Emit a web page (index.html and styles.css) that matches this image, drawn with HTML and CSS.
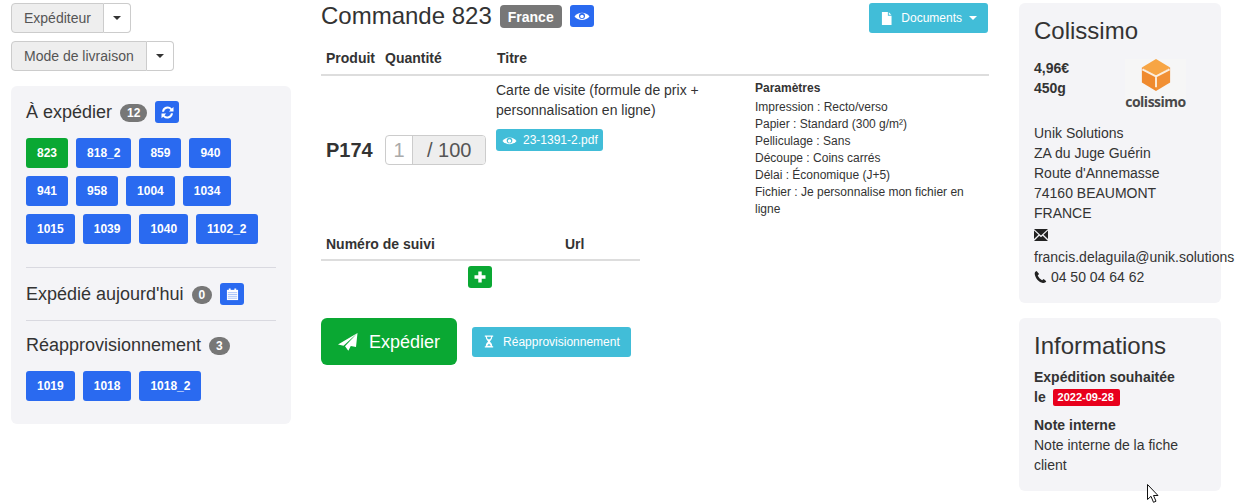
FILE: index.html
```html
<!DOCTYPE html>
<html lang="fr">
<head>
  <meta charset="UTF-8">
  <title>Commande 823</title>
  <link rel="stylesheet" href="styles.css">
</head>
<body>

  <div class="page">

    <!-- left column -->
    <div class="col-left">
      <div class="split-btn">
        <span class="split-label">Expéditeur</span>
        <span class="split-caret"><i class="caret"></i></span>
      </div>
      <div class="split-btn">
        <span class="split-label">Mode de livraison</span>
        <span class="split-caret"><i class="caret"></i></span>
      </div>

      <div class="panel orders">
        <div class="orders-head">
          <span class="orders-title">À expédier</span>
          <span class="badge">12</span>
          <span class="btn-icon blue">
            <svg viewBox="0 0 16 16" width="15" height="15"><path d="M2.2 7.2A6 6 0 0 1 12.6 3.6L14.4 2v5h-5l1.8-1.8A4 4 0 0 0 4.300 7.200zM13.800 8.800A6 6 0 0 1 3.400 12.400L1.600 14V9h5L4.800 10.800A4 4 0 0 0 11.700 8.800z" fill="#fff"/></svg>
          </span>
        </div>
        <div class="order-list">
          <span class="order green">823</span>
          <span class="order">818_2</span>
          <span class="order">859</span>
          <span class="order">940</span>
          <span class="order">941</span>
          <span class="order">958</span>
          <span class="order">1004</span>
          <span class="order">1034</span>
          <span class="order">1015</span>
          <span class="order">1039</span>
          <span class="order">1040</span>
          <span class="order">1102_2</span>
        </div>

        <hr class="first-rule">

        <div class="orders-head">
          <span class="orders-title">Expédié aujourd'hui</span>
          <span class="badge">0</span>
          <span class="btn-icon blue">
            <svg viewBox="0 0 14 14" width="13" height="13"><path d="M1 2h12v11H1z" fill="#fff"/><path d="M3 0.500h2v2.500H3zM9 0.500h2v2.500H9z" fill="#fff"/><path d="M2 5h10M2 7h10M2 9h10M2 11h10" stroke="#2a6af0" stroke-width="0.700" opacity="0.600"/></svg>
          </span>
        </div>

        <hr class="last-rule">

        <div class="orders-head short">
          <span class="orders-title">Réapprovisionnement</span>
          <span class="badge">3</span>
        </div>
        <div class="order-list tight">
          <span class="order">1019</span>
          <span class="order">1018</span>
          <span class="order">1018_2</span>
        </div>
      </div>
    </div>

    <!-- center column -->
    <div class="col-main">
      <div class="main-head">
        <h3>Commande 823</h3>
        <span class="tag">France</span>
        <span class="btn-icon blue">
          <svg viewBox="0 0 16 16" width="16" height="16"><path d="M0.500 8.500C4 3.500 12 3.500 15.500 8.500C12 13 4 13 0.500 8.500z" fill="#fff"/><circle cx="8" cy="8" r="3" fill="#2a6af0"/><circle cx="8" cy="8.500" r="1.800" fill="#fff"/></svg>
        </span>
        <span class="btn-docs">
          <svg viewBox="0 0 12 14" width="11" height="13"><path d="M1 0h6.500v4H11.500v10H1zM8.500 0.200L11.300 3H8.500z" fill="#fff"/></svg>
          Documents
          <i class="caret white"></i>
        </span>
      </div>

      <table class="grid products">
        <colgroup>
          <col class="c-prod"><col class="c-qty"><col class="c-title"><col class="c-params">
        </colgroup>
        <thead>
          <tr><th>Produit</th><th>Quantité</th><th colspan="2">Titre</th></tr>
        </thead>
        <tbody>
          <tr>
            <td class="ref">P174</td>
            <td class="qty-cell">
              <div class="qty"><span class="qty-input">1</span><span class="qty-total">/ 100</span></div>
            </td>
            <td class="title-cell">
              Carte de visite (formule de prix + personnalisation en ligne)
              <span class="btn-file">
                <svg viewBox="0 0 16 16" width="15" height="15"><path d="M0.500 8.500C4 3.500 12 3.500 15.500 8.500C12 13 4 13 0.500 8.500z" fill="#fff"/><circle cx="8" cy="8" r="3" fill="#41bdd8"/><circle cx="8" cy="8.500" r="1.800" fill="#fff"/></svg>
                23-1391-2.pdf
              </span>
            </td>
            <td class="params">
              <b>Paramètres</b>
              Impression : Recto/verso<br>
              Papier : Standard (300 g/m²)<br>
              Pelliculage : Sans<br>
              Découpe : Coins carrés<br>
              Délai : Économique (J+5)<br>
              Fichier : Je personnalise mon fichier en ligne
            </td>
          </tr>
        </tbody>
      </table>

      <table class="grid tracking">
        <colgroup><col class="c-num"><col></colgroup>
        <thead>
          <tr><th>Numéro de suivi</th><th>Url</th></tr>
        </thead>
        <tbody>
          <tr>
            <td colspan="2" class="add-cell">
              <span class="btn-icon green">
                <svg viewBox="0 0 12 12" width="12" height="12"><path d="M4.300 0.500h3.400v3.800h3.800v3.400H7.700v3.800H4.300V7.700H0.500V4.300h3.800z" fill="#fff"/></svg>
              </span>
            </td>
          </tr>
        </tbody>
      </table>

      <div class="actions">
        <span class="btn-ship">
          <svg viewBox="0 0 20 18" width="20" height="18"><path d="M19.500 0L0 11.500l5.500 1.200L19.500 0zM19.500 0L7 13.200l3.300 4.500L12.800 13l5.200 1z" fill="#fff"/></svg>
          Expédier
        </span>
        <span class="btn-restock">
          <svg viewBox="0 0 10 14" width="10" height="13"><path d="M0.500 0.500h9v1.500H8.500C8.500 5 6.500 6 6 7c0.500 1 2.500 2 2.500 5h1v1.500h-9V12h1C1.500 9 3.500 8 4 7 3.500 6 1.500 5 1.500 2h-1zM2.800 2c0 1 .5 2 1 2.500h2.400c.5-.5 1-1.500 1-2.500zM3 11.500h4L5 9.300z" fill="#fff" fill-rule="evenodd"/></svg>
          Réapprovisionnement
        </span>
      </div>
    </div>

    <!-- right column -->
    <div class="col-right">
      <div class="panel side">
        <h3>Colissimo</h3>
        <div class="carrier">
          <div class="carrier-info"><b>4,96€</b><b>450g</b></div>
          <div class="logo">
            <svg viewBox="0 0 30 34" width="30" height="34">
              <path d="M15 0L30 9 15 18 0 9z" fill="#f7a544"/>
              <path d="M0 9L15 18V34L0 25z" fill="#ef8a2e"/>
              <path d="M30 9L15 18V34L30 25z" fill="#f19035"/>
              <path d="M0.500 11L15 18.500 29.500 11M15 18.500V30" fill="none" stroke="#fbeede" stroke-width="2"/>
            </svg>
            <span class="logo-text">colissimo</span>
          </div>
        </div>
        <div class="address">
          Unik Solutions<br>
          ZA du Juge Guérin<br>
          Route d'Annemasse<br>
          74160 BEAUMONT<br>
          FRANCE
        </div>
        <div class="mail-icon">
          <svg viewBox="0 0 14 12" width="14" height="12"><path d="M0 0h14L7 6.500zM0 1.500L4.500 5.800 0 10zM14 1.500L9.500 5.800 14 10zM0 12L5.300 6.700 7 8.200 8.700 6.700 14 12z" fill="#222"/></svg>
        </div>
        <div class="mail">francis.delaguila@unik.solutions</div>
        <div class="phone">
          <svg viewBox="0 0 14 14" width="13" height="14"><path d="M2.800 0.500C1.500 1 .5 2 .8 4c.8 4.500 4.500 8.500 8.700 9.500 1.500.3 3-.5 3.700-1.800l-2.800-2.500-1.700 1.300C6.800 9.700 4.800 7.400 4 5.500l1.500-1.600z" fill="#222"/></svg>
          04 50 04 64 62
        </div>
      </div>

      <div class="panel side">
        <h3>Informations</h3>
        <b class="line">Expédition souhaitée</b>
        <b class="line">le <span class="date">2022-09-28</span></b>
        <b class="line note-title">Note interne</b>
        <div>Note interne de la fiche client</div>
      </div>
    </div>

  </div>

  <svg class="cursor" viewBox="0 0 12 19" width="12" height="19"><path d="M0.500 0.500V15.500L4 12.300 6.500 18.300 9 17.200 6.500 11.500H11z" fill="#fff" stroke="#111" stroke-width="1"/></svg>

</body>
</html>
```

FILE: styles.css
```css
body {
  margin: 0;
  font-family: "Liberation Sans", Arial, sans-serif;
  font-size: 14px;
  line-height: 20px;
  color: #333;
  background: #fff;
}

.page {
  display: flex;
  gap: 30px;
  padding: 3px 0 0 11px;
}

.col-left {
  width: 280px;
  flex: none;
}

.col-main {
  width: 668px;
  flex: none;
}

.col-right {
  width: 202px;
  flex: none;
}

.panel {
  background: #f4f4f7;
  border-radius: 6px;
  padding: 15px;
}

/* dropdowns top left */
.split-btn {
  display: flex;
  width: fit-content;
  height: 30px;
  margin-bottom: 8px;
  color: #555;
}

.split-label {
  padding: 4px 12px;
  background: #eee;
  border: 1px solid #ccc;
  border-radius: 4px 0 0 4px;
}

.split-caret {
  display: flex;
  align-items: center;
  justify-content: center;
  width: 26px;
  border: 1px solid #ccc;
  border-left: none;
  border-radius: 0 4px 4px 0;
}

.caret {
  display: inline-block;
  border-top: 4px solid #333;
  border-left: 4px solid transparent;
  border-right: 4px solid transparent;
}

.caret.white {
  border-top-color: #fff;
  margin-left: -2px;
}

/* order lists */
.orders {
  margin-top: 15px;
  padding-bottom: 23px;
}

.orders-head {
  display: flex;
  align-items: center;
  gap: 8px;
  height: 22px;
}

.orders-head.short {
  height: 20px;
}

.orders-title {
  font-size: 18px;
}

.badge {
  background: #777;
  color: #fff;
  font-size: 12px;
  font-weight: bold;
  line-height: 12px;
  padding: 3px 7px;
  border-radius: 10px;
  margin-top: 2px;
}

.btn-icon {
  display: inline-flex;
  align-items: center;
  justify-content: center;
  width: 24px;
  height: 22px;
  border-radius: 3px;
}

.blue {
  background: #2a6af0;
}

.green {
  background: #0aa833;
}

.order-list {
  display: flex;
  flex-wrap: wrap;
  gap: 8px;
  margin-top: 15px;
}

.order-list.tight {
  margin-top: 16px;
}

.order {
  padding: 5px 11px;
  font-size: 12px;
  font-weight: bold;
  color: #fff;
  background: #2a6af0;
  border-radius: 3px;
}

.order.green {
  background: #0aa833;
}

.panel hr {
  border: none;
  border-top: 1px solid #d9d9e0;
  margin: 15px 0;
}

.panel hr.first-rule {
  margin: 23px 0 15px;
}

.panel hr.last-rule {
  margin: 15px 0 14px;
}

/* center */
.main-head {
  display: flex;
  align-items: center;
  height: 26px;
}

.main-head h3 {
  margin: 0 8px 0 0;
  font-size: 24px;
  font-weight: normal;
  line-height: 26px;
}

.tag {
  background: #777;
  color: #fff;
  font-weight: bold;
  padding: 2px 8px 1px;
  border-radius: 4px;
  margin-right: 8px;
}

.btn-docs {
  display: flex;
  align-items: center;
  align-self: flex-start;
  gap: 9px;
  height: 30px;
  margin-left: auto;
  margin-right: 1px;
  padding: 0 11px 0 12px;
  background: #41bdd8;
  color: #fff;
  font-size: 12px;
  border-radius: 3px;
}

.grid {
  border-collapse: collapse;
  table-layout: fixed;
}

.grid th {
  text-align: left;
  padding: 10px 5px 6px;
  border-bottom: 2px solid #ddd;
}

.products {
  width: 668px;
  margin-top: 9px;
}

.c-prod {
  width: 59px;
}

.c-qty {
  width: 112px;
}

.c-title {
  width: 258px;
}

.c-params {
  width: 239px;
}

.ref {
  padding: 0 5px;
  font-size: 20px;
  font-weight: bold;
}

.qty-cell {
  padding: 0 5px;
}

.qty {
  display: flex;
  width: 101px;
  height: 30px;
  box-sizing: border-box;
  border: 1px solid #ccc;
  border-radius: 4px;
  font-size: 20px;
  line-height: 28px;
}

.qty-input {
  width: 26px;
  text-align: center;
  color: #aaa;
  border-right: 1px solid #ccc;
}

.qty-total {
  flex: 1;
  padding-left: 14px;
  background: #eee;
  color: #555;
  border-radius: 0 3px 3px 0;
}

.title-cell {
  vertical-align: top;
  padding: 4px 5px 4px 4px;
}

.btn-file {
  display: flex;
  align-items: center;
  gap: 6px;
  width: fit-content;
  height: 22px;
  margin-top: 9px;
  padding: 0 5px 0 6px;
  background: #41bdd8;
  color: #fff;
  font-size: 12px;
  border-radius: 3px;
}

.params {
  vertical-align: top;
  padding: 4px 5px 5px;
  font-size: 12px;
  line-height: 17px;
}

.params b {
  display: block;
  margin-bottom: 2px;
}

.tracking {
  width: 319px;
}

.tracking th {
  padding: 11px 5px 5px;
}

.c-num {
  width: 239px;
}

.add-cell {
  text-align: center;
  padding: 5px 1px 0 0;
  line-height: 0;
}

.actions {
  display: flex;
  align-items: center;
  gap: 15px;
  margin-top: 30px;
}

.btn-ship {
  display: flex;
  align-items: center;
  gap: 11px;
  height: 47px;
  padding: 0 17px;
  box-sizing: border-box;
  background: #0aa833;
  color: #fff;
  font-size: 18px;
  border-radius: 6px;
}

.btn-restock {
  display: flex;
  align-items: center;
  gap: 9px;
  height: 30px;
  padding: 0 11px 0 12px;
  background: #41bdd8;
  color: #fff;
  font-size: 12px;
  border-radius: 3px;
}

/* right */
.side {
  margin-bottom: 15px;
  padding-bottom: 16px;
}

.side h3 {
  margin: 0 0 14px;
  font-size: 24px;
  font-weight: normal;
  line-height: 26px;
}

.carrier {
  display: flex;
  justify-content: space-between;
  height: 65px;
}

.carrier-info b {
  display: block;
}

.logo {
  display: flex;
  flex-direction: column;
  align-items: center;
  width: 61px;
  height: 51px;
  margin-top: 1px;
  margin-right: 20px;
  background: #f6f6f6;
}

.logo-text {
  margin-top: 3px;
  font-family: "Open Sans", sans-serif;
  font-size: 14px;
  font-weight: 700;
  line-height: 16px;
  letter-spacing: -0.5px;
  color: #4a4a4a;
}

.mail-icon {
  display: flex;
  align-items: center;
  height: 24px;
}

.mail {
  white-space: nowrap;
}

.phone svg {
  vertical-align: -2px;
}

.line {
  display: block;
}

.note-title {
  margin-top: 8px;
}

.side h3 + .line {
  margin-top: -6px;
}

.date {
  display: inline-block;
  margin-left: 3px;
  padding: 0 6px 0 5px;
  background: #e8001c;
  color: #fff;
  font-size: 11px;
  line-height: 17px;
  border-radius: 2px;
  vertical-align: 1px;
}

.cursor {
  position: absolute;
  left: 1147px;
  top: 484px;
}
```
